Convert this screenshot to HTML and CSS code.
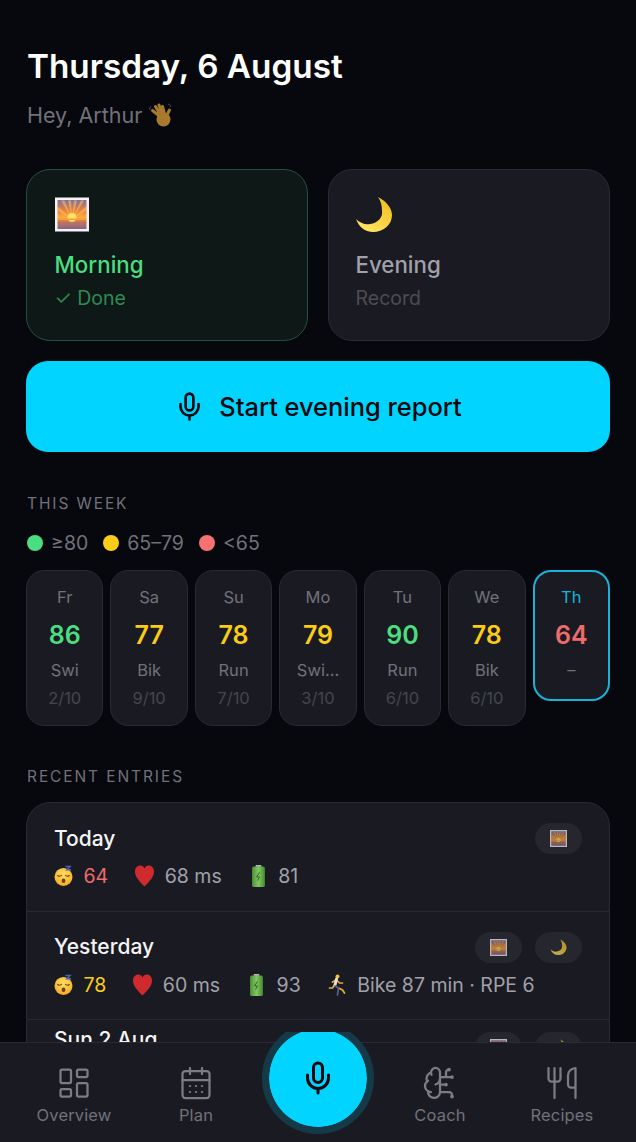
FILE: index.html
```html
<!DOCTYPE html>
<html lang="en">
<head>
  <meta charset="utf-8">
  <meta name="viewport" content="width=device-width, initial-scale=1.0">
  <title>Today</title>
  <link rel="stylesheet" href="styles.css">
</head>
<body>
  <svg class="sprites" aria-hidden="true">
    <defs>
      <linearGradient id="sky" x1="0" y1="0" x2="0" y2="1">
        <stop offset="0" stop-color="#7f6fa8"/>
        <stop offset="0.35" stop-color="#e8803f"/>
        <stop offset="0.62" stop-color="#fbb03a"/>
        <stop offset="0.66" stop-color="#e8853a"/>
        <stop offset="1" stop-color="#84608f"/>
      </linearGradient>
      <linearGradient id="moon-fill" x1="0.8" y1="0.2" x2="0.3" y2="0.9">
        <stop offset="0" stop-color="#f2c42a"/>
        <stop offset="1" stop-color="#ffe25e"/>
      </linearGradient>
      <radialGradient id="face-fill" cx="0.5" cy="0.35" r="0.7">
        <stop offset="0" stop-color="#ffdf60"/>
        <stop offset="1" stop-color="#f5a623"/>
      </radialGradient>
      <linearGradient id="batt-fill" x1="0" y1="0" x2="1" y2="0">
        <stop offset="0" stop-color="#4a9236"/>
        <stop offset="0.5" stop-color="#82c860"/>
        <stop offset="1" stop-color="#418a30"/>
      </linearGradient>
    </defs>
    <symbol id="i-sunrise" viewBox="0 0 34 34">
      <rect x="0" y="0" width="34" height="34" fill="#f4f4f6"/>
      <rect x="2.500" y="2.500" width="29" height="29" fill="url(#sky)"/>
      <path d="M17 22 6 3h3.500zM17 22 13 3h3zM17 22l2-19h3zM17 22 26 3h3zM17 22 3 9v4zM17 22 31 9v4z" fill="#ffc65a" opacity=".55"/>
      <circle cx="17" cy="20" r="4.500" fill="#ffe066"/>
      <rect x="2.500" y="21" width="29" height="1.500" fill="#f9a13a"/>
      <rect x="2.500" y="25" width="29" height="1" fill="#a86a6a" opacity=".6"/>
    </symbol>
    <symbol id="i-moon" viewBox="0 0 38 38">
      <path d="M23 1C31 5 37 12 37 19 37 29 28 36 18 36 10 36 4 31 1 23 5 27 10 29 15 28 23 27 28 21 27 15 27 10 26 5 23 1Z" fill="url(#moon-fill)"/>
    </symbol>
    <symbol id="i-wave" viewBox="0 0 23 26">
      <path d="M13 16 3.500 8.500M13 15 6.500 4.500M14 14 10 3M16 14 13.500 4.500M17 15l3.500-7" stroke="#a87a2c" stroke-width="3" stroke-linecap="round" fill="none"/>
      <circle cx="14.500" cy="17.500" r="7" fill="#a87a2c"/>
      <path d="M1 8C.5 6.500 1 5 2 4M19 2c1.500.5 2.500 1.500 3 3" stroke="#4d5260" stroke-width="1" fill="none"/>
    </symbol>
    <symbol id="i-sleep" viewBox="0 0 20 22">
      <circle cx="10" cy="12" r="9.500" fill="url(#face-fill)"/>
      <path d="M4 10.500c1 1 3 1 4-.3M12 10.200c1 1.300 3 1.300 4 .3" stroke="#6b4212" stroke-width="1.200" fill="none" stroke-linecap="round"/>
      <ellipse cx="10" cy="16" rx="2" ry="2.300" fill="#6b4212"/>
      <path d="M12 1h5l-3.500 3.500H18" stroke="#4a63b5" stroke-width="1.500" fill="none"/>
    </symbol>
    <symbol id="i-heart" viewBox="0 0 20 22">
      <path d="M10 22C5 17 0 12 0 6.500 0 2.500 2.500 0 5.500 0 7.500 0 9 1 10 3c1-2 2.500-3 4.500-3C17.500 0 20 2.500 20 6.500 20 12 15 17 10 22z" fill="#cf2a2e"/>
    </symbol>
    <symbol id="i-battery" viewBox="0 0 14 24">
      <rect x="4" y="0" width="6" height="2" fill="#b5bab0"/>
      <rect x="0" y="1.500" width="14" height="22.500" rx="2" fill="url(#batt-fill)"/>
      <path d="M8 8 5 13h3l-2 4" stroke="#2a5a20" fill="none"/>
    </symbol>
    <symbol id="i-run" viewBox="0 0 18 22">
      <circle cx="9" cy="2.500" r="2" fill="#f0bd45"/>
      <path d="M6 11l-2 3-3 0M8 6 4 8M8 6l3 3 3 0M10 14l4 2 2 3" stroke="#e3ad3c" stroke-width="1.700" fill="none" stroke-linecap="round"/>
      <path d="M8 5 6.500 11" stroke="#e9e2d2" stroke-width="3" stroke-linecap="round"/>
      <path d="M6.500 12l3.500 2-1 7" stroke="#5a5f8c" stroke-width="1.700" fill="none" stroke-linecap="round"/>
    </symbol>
    <symbol id="i-mic" viewBox="0 0 24 24">
      <path d="M12 2a3 3 0 0 0-3 3v7a3 3 0 0 0 6 0V5a3 3 0 0 0-3-3Z"/>
      <path d="M19 10v2a7 7 0 0 1-14 0v-2"/>
      <path d="M12 19v3"/>
    </symbol>
  </svg>

  <div class="screen">
    <main class="content">
      <h1>Thursday, 6 August</h1>
      <p class="greeting">Hey, Arthur <svg class="emoji wave"><use href="#i-wave"/></svg></p>

      <div class="reports">
        <div class="report done">
          <svg class="report-icon"><use href="#i-sunrise"/></svg>
          <div class="report-name">Morning</div>
          <div class="report-state">✓ Done</div>
        </div>
        <div class="report">
          <svg class="report-icon moon"><use href="#i-moon"/></svg>
          <div class="report-name">Evening</div>
          <div class="report-state">Record</div>
        </div>
      </div>

      <button class="start">
        <svg class="line-icon start-mic"><use href="#i-mic"/></svg>
        Start evening report
      </button>

      <h2 class="section-title week-title">THIS WEEK</h2>
      <div class="legend">
        <span class="legend-item"><i class="dot good"></i>≥80</span>
        <span class="legend-item"><i class="dot mid"></i>65–79</span>
        <span class="legend-item"><i class="dot low"></i>&lt;65</span>
      </div>

      <div class="week">
        <div class="day"><div class="day-name">Fr</div><div class="day-score green">86</div><div class="day-sport">Swi</div><div class="day-rpe">2/10</div></div>
        <div class="day"><div class="day-name">Sa</div><div class="day-score yellow">77</div><div class="day-sport">Bik</div><div class="day-rpe">9/10</div></div>
        <div class="day"><div class="day-name">Su</div><div class="day-score yellow">78</div><div class="day-sport">Run</div><div class="day-rpe">7/10</div></div>
        <div class="day"><div class="day-name">Mo</div><div class="day-score yellow">79</div><div class="day-sport">Swi…</div><div class="day-rpe">3/10</div></div>
        <div class="day"><div class="day-name">Tu</div><div class="day-score green">90</div><div class="day-sport">Run</div><div class="day-rpe">6/10</div></div>
        <div class="day"><div class="day-name">We</div><div class="day-score yellow">78</div><div class="day-sport">Bik</div><div class="day-rpe">6/10</div></div>
        <div class="day today"><div class="day-name">Th</div><div class="day-score red">64</div><div class="day-sport">–</div></div>
      </div>

      <h2 class="section-title recent-title">RECENT ENTRIES</h2>
      <div class="entries">
        <div class="entry">
          <div class="entry-head">
            <span class="entry-date">Today</span>
            <span class="pills"><span class="pill"><svg class="pill-icon"><use href="#i-sunrise"/></svg></span></span>
          </div>
          <div class="stats">
            <span class="stat"><svg class="emoji"><use href="#i-sleep"/></svg><b class="red">64</b></span>
            <span class="stat"><svg class="emoji"><use href="#i-heart"/></svg>68 ms</span>
            <span class="stat"><svg class="emoji"><use href="#i-battery"/></svg>81</span>
          </div>
        </div>
        <div class="entry">
          <div class="entry-head">
            <span class="entry-date">Yesterday</span>
            <span class="pills">
              <span class="pill"><svg class="pill-icon"><use href="#i-sunrise"/></svg></span>
              <span class="pill"><svg class="pill-icon"><use href="#i-moon"/></svg></span>
            </span>
          </div>
          <div class="stats">
            <span class="stat"><svg class="emoji"><use href="#i-sleep"/></svg><b class="yellow">78</b></span>
            <span class="stat"><svg class="emoji"><use href="#i-heart"/></svg>60 ms</span>
            <span class="stat"><svg class="emoji"><use href="#i-battery"/></svg>93</span>
            <span class="stat"><svg class="emoji"><use href="#i-run"/></svg>Bike 87 min · RPE 6</span>
          </div>
        </div>
        <div class="entry entry-last">
          <div class="entry-head">
            <span class="entry-date">Sun 2 Aug</span>
            <span class="pills">
              <span class="pill"><svg class="pill-icon"><use href="#i-sunrise"/></svg></span>
              <span class="pill"><svg class="pill-icon"><use href="#i-moon"/></svg></span>
            </span>
          </div>
        </div>
      </div>
    </main>

    <nav class="tabbar">
      <div class="fab-clip">
        <div class="fab"><svg class="line-icon fab-mic"><use href="#i-mic"/></svg></div>
      </div>
      <a class="tab">
        <svg class="line-icon tab-icon" viewBox="0 0 24 24"><rect x="3" y="3" width="7" height="9" rx="1"/><rect x="14" y="3" width="7" height="5" rx="1"/><rect x="14" y="12" width="7" height="9" rx="1"/><rect x="3" y="16" width="7" height="5" rx="1"/></svg>
        Overview
      </a>
      <a class="tab">
        <svg class="line-icon tab-icon" viewBox="0 0 24 24"><path d="M8 2v4M16 2v4"/><rect x="3" y="4" width="18" height="18" rx="2"/><path d="M3 10h18M8 14h.01M12 14h.01M16 14h.01M8 18h.01M12 18h.01M16 18h.01"/></svg>
        Plan
      </a>
      <span class="tab-gap"></span>
      <a class="tab">
        <svg class="line-icon tab-icon" viewBox="0 0 24 24"><path d="M12 5a3 3 0 1 0-5.997.125 4 4 0 0 0-2.526 5.77 4 4 0 0 0 .556 6.588A4 4 0 1 0 12 18Z"/><path d="M9 13a4.500 4.500 0 0 0 3-4M6.003 5.125A3 3 0 0 0 6.401 6.500M3.477 10.896a4 4 0 0 1 .585-.396M6 18a4 4 0 0 1-1.967-.516M12 13h4M12 18h6a2 2 0 0 1 2 2v1M12 8h8M16 8V5a2 2 0 0 1 2-2"/><circle cx="16" cy="13" r=".5"/><circle cx="18" cy="3" r=".5"/><circle cx="20" cy="21" r=".5"/><circle cx="20" cy="8" r=".5"/></svg>
        Coach
      </a>
      <a class="tab">
        <svg class="line-icon tab-icon" viewBox="0 0 24 24"><path d="M3 2v7c0 1.100.9 2 2 2h4a2 2 0 0 0 2-2V2M7 2v20M21 15V2a5 5 0 0 0-5 5v6c0 1.100.9 2 2 2h3Zm0 0v7"/></svg>
        Recipes
      </a>
    </nav>
  </div>
</body>
</html>
```

FILE: styles.css
```css
:root {
  --bg: #07080d;
  --card: #1a1b22;
  --card-border: #2a2b32;
  --cyan: #00d4ff;
  --green: #4ade80;
  --yellow: #facc15;
  --red: #f87171;
  --muted: #71717a;
  --soft: #a1a1aa;
}
* {
  box-sizing: border-box;
}
html, body {
  margin: 0;
  height: 100%;
  background-color: var(--bg);
  font-family: Inter, "Liberation Sans", sans-serif;
}
.sprites {
  width: 0;
  height: 0;
  position: absolute;
}
.screen {
  height: 100vh;
  display: flex;
  flex-direction: column;
  overflow: hidden;
}
.content {
  flex: 1;
  min-height: 0;
  overflow: hidden;
  padding: 45px 26px 0 27px;
}
h1 {
  margin: 0;
  font-size: 33.300px;
  line-height: 42px;
  font-weight: 600;
  color: #fff;
}
.greeting {
  margin: 14px 0 0;
  display: flex;
  align-items: center;
  gap: 7px;
  font-size: 21.500px;
  line-height: 28px;
  color: var(--muted);
}
.emoji.wave {
  width: 23px;
  height: 26px;
}

/* morning / evening */
.reports {
  margin: 40px 0 0 -1px;
  display: grid;
  grid-template-columns: 1fr 1fr;
  gap: 20px;
}
.report {
  height: 172px;
  padding: 27px 26.500px 0;
  border: 1.500px solid var(--card-border);
  border-radius: 24px;
  background-color: var(--card);
}
.report.done {
  padding-left: 27.500px;
  border-color: #20533a;
  background-color: #0e1816;
}
.report-icon {
  display: block;
  width: 34px;
  height: 35px;
}
.report-icon.moon {
  width: 38px;
  height: 38px;
  margin: -1px 0 -2px -1px;
}
.report-name {
  margin-top: 18px;
  font-size: 22.300px;
  line-height: 30px;
  font-weight: 500;
  color: var(--soft);
}
.report-state {
  margin-top: 4px;
  font-size: 19.500px;
  line-height: 28px;
  color: #4b4c54;
}
.done .report-name {
  color: var(--green);
}
.done .report-state {
  color: #2f8a55;
}

/* start button */
.start {
  margin: 20px 0 0 -1px;
  width: 584px;
  height: 91px;
  display: flex;
  align-items: center;
  justify-content: center;
  gap: 14px;
  border: none;
  border-radius: 22px;
  background-color: var(--cyan);
  color: #07080d;
  font-family: inherit;
  font-size: 25.400px;
  font-weight: 500;
}
.line-icon {
  fill: none;
  stroke: currentColor;
  stroke-width: 1.500;
  stroke-linecap: round;
  stroke-linejoin: round;
}
.start-mic {
  width: 31px;
  height: 31px;
  stroke-width: 2;
}

/* sections */
.section-title {
  margin: 0;
  font-size: 15.500px;
  line-height: 20px;
  font-weight: 400;
  letter-spacing: 1.900px;
  color: var(--muted);
}
.week-title {
  margin-top: 42px;
}
.legend {
  margin-top: 17px;
  display: flex;
  gap: 15px;
}
.legend-item {
  display: flex;
  align-items: center;
  gap: 8px;
  font-size: 19.500px;
  line-height: 24px;
  color: var(--muted);
}
.dot {
  width: 16px;
  height: 16px;
  border-radius: 50%;
}
.dot.good { background-color: var(--green); }
.dot.mid { background-color: var(--yellow); }
.dot.low { background-color: var(--red); }

/* week strip */
.week {
  margin: 15px 0 0 -1px;
  width: 584px;
  display: grid;
  grid-template-columns: repeat(7, 1fr);
  gap: 7px;
  align-items: start;
}
.day {
  height: 155.500px;
  padding-top: 15px;
  border: 1.500px solid var(--card-border);
  border-radius: 18px;
  background-color: var(--card);
  text-align: center;
}
.day.today {
  height: 131px;
  padding-top: 14px;
  border: 2px solid #16b4d8;
}
.day-name {
  font-size: 16.500px;
  line-height: 22px;
  color: var(--muted);
}
.today .day-name {
  color: #16b4d8;
}
.day-score {
  margin-top: 11px;
  font-size: 25px;
  line-height: 32px;
  font-weight: 600;
}
.day-sport {
  margin-top: 8px;
  font-size: 16.500px;
  line-height: 22px;
  color: var(--muted);
}
.day-rpe {
  margin-top: 6px;
  font-size: 16.500px;
  line-height: 22px;
  color: #45464e;
}
.green { color: var(--green); }
.yellow { color: var(--yellow); }
.red { color: #ee6c6c; }

/* recent entries */
.recent-title {
  margin-top: 41.500px;
}
.entries {
  margin: 15px 0 0 -1px;
  width: 584px;
  border: 1.500px solid var(--card-border);
  border-radius: 24px;
  background-color: var(--card);
}
.entry {
  height: 108.500px;
  padding: 20px 27px 0;
  border-bottom: 1.500px solid var(--card-border);
}
.entry-head {
  display: flex;
  justify-content: space-between;
  align-items: center;
  height: 31px;
}
.entry-date {
  font-size: 21px;
  line-height: 26px;
  font-weight: 500;
  color: #f4f4f5;
}
.pills {
  display: flex;
  gap: 13px;
}
.pill {
  width: 47px;
  height: 31px;
  display: flex;
  align-items: center;
  justify-content: center;
  border-radius: 16px;
  background-color: #26272e;
}
.pill-icon {
  width: 17px;
  height: 17px;
  opacity: 0.7;
}
.entry-last {
  padding-top: 6.500px;
}
.entry-last .entry-head {
  align-items: flex-start;
}
.entry-last .pills {
  margin-top: 5px;
}
.stats {
  margin-top: 7px;
  display: flex;
  gap: 27px;
  font-size: 19.500px;
  line-height: 30px;
  color: var(--soft);
}
.stat {
  display: flex;
  align-items: center;
  gap: 10.500px;
}
.stat b {
  font-weight: 400;
}
.emoji {
  width: 19px;
  height: 22px;
}

/* bottom nav */
.tabbar {
  position: relative;
  flex: none;
  height: 100px;
  padding: 22px 13px 0;
  display: grid;
  grid-template-columns: repeat(5, 1fr);
  border-top: 1.500px solid #2a2b32;
  background-color: var(--card);
}
.tab {
  display: flex;
  flex-direction: column;
  align-items: center;
  gap: 4px;
  font-size: 16.500px;
  line-height: 20px;
  letter-spacing: 0.150px;
  color: var(--muted);
}
.tab-icon {
  width: 36px;
  height: 36px;
  color: #7c7c85;
}
.fab-clip {
  position: absolute;
  top: -11.500px;
  left: 258px;
  width: 120px;
  height: 106px;
  overflow: hidden;
}
.fab {
  width: 112px;
  height: 112px;
  margin: -10px 0 0 4px;
  display: flex;
  align-items: center;
  justify-content: center;
  border: 7px solid #143a48;
  border-radius: 50%;
  background-color: var(--cyan);
  color: #07080d;
  background-clip: padding-box;
}
.fab-mic {
  width: 36px;
  height: 36px;
  stroke-width: 2;
}
```
